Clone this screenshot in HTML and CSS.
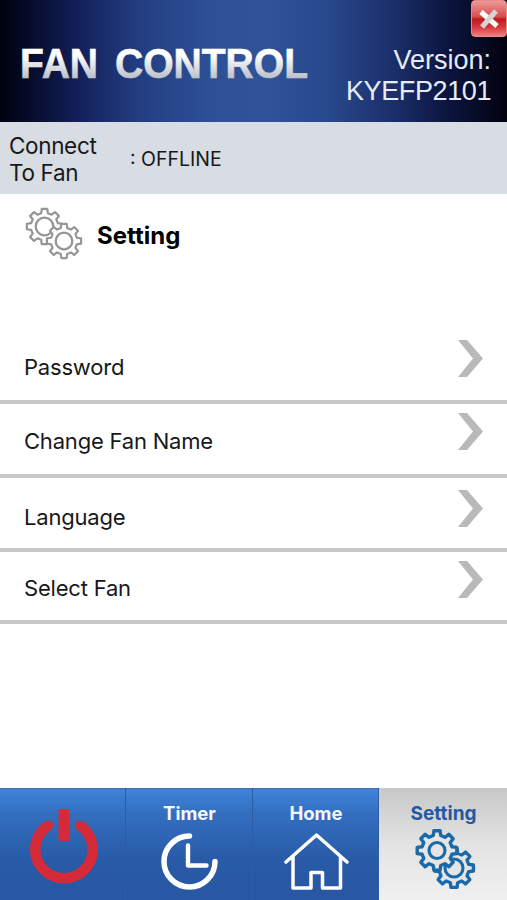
FILE: index.html
```html
<!DOCTYPE html>
<html lang="en">
<head>
<meta charset="utf-8">
<title>Fan Control</title>
<link rel="stylesheet" href="styles.css">
</head>
<body>
<svg class="defs" width="0" height="0" aria-hidden="true">
  <defs>
    <path id="gear" d="M-2.8-18H2.8L3.4-13.6L7.21-12.02L10.75-14.71L14.71-10.75L12.02-7.21L13.6-3.4L18-2.8V2.8L13.6 3.4L12.02 7.21L14.71 10.75L10.75 14.71L7.21 12.02L3.4 13.6L2.8 18H-2.8L-3.4 13.6L-7.21 12.02L-10.75 14.71L-14.71 10.75L-12.02 7.21L-13.6 3.4L-18 2.8V-2.8L-13.6-3.4L-12.02-7.21L-14.71-10.75L-10.75-14.71L-7.21-12.02L-3.4-13.6Z"/>
    <path id="chevron" d="M0 0H9L25 18.500L9 37H0L15 18.500Z"/>
  </defs>
</svg>
<div class="app">
  <header class="header">
    <svg class="title" width="300" height="50" viewBox="0 0 300 50">
      <defs>
        <linearGradient id="metal" gradientUnits="userSpaceOnUse" x1="0" y1="8" x2="0" y2="38">
          <stop offset=".25" stop-color="#fff"/>
          <stop offset="1" stop-color="#bcc0c9"/>
        </linearGradient>
      </defs>
      <text class="title-text" x="-1" y="38" textLength="78" lengthAdjust="spacingAndGlyphs">FAN</text>
      <text class="title-text" x="94" y="38" textLength="193" lengthAdjust="spacingAndGlyphs">CONTROL</text>
    </svg>
    <p class="version">Version:<br><span class="model">KYEFP2101</span></p>
    <button class="close" aria-label="Close">
      <svg width="24" height="24" viewBox="0 0 24 24"><path d="M4 5L20 19" stroke="#fff"/><path d="M19 4L5 20" stroke="#d6d4d4"/></svg>
    </button>
  </header>
  <section class="status">
    <span class="status-label">Connect<br>To Fan</span>
    <span class="status-value">: OFFLINE</span>
  </section>
  <main class="main">
    <div class="heading">
      <svg class="gears" width="60" height="54" viewBox="0 0 60 54">
        <g fill="#fff" stroke="#989694" stroke-width="2.300" stroke-linejoin="round">
          <g transform="translate(19.500 19.500)"><use href="#gear" transform="scale(.98)"/><circle r="8.800"/></g>
          <g transform="translate(39 34)"><use href="#gear" transform="scale(.95)"/><circle r="8.300"/></g>
        </g>
      </svg>
      <h1>Setting</h1>
    </div>
    <ul class="list">
      <li class="row password"><span>Password</span><svg width="25" height="37"><use href="#chevron"/></svg></li>
      <li class="row name"><span>Change Fan Name</span><svg width="25" height="37"><use href="#chevron"/></svg></li>
      <li class="row language"><span>Language</span><svg width="25" height="37"><use href="#chevron"/></svg></li>
      <li class="row select"><span>Select Fan</span><svg width="25" height="37"><use href="#chevron"/></svg></li>
    </ul>
  </main>
  <nav class="tabs">
    <a class="tab power" aria-label="Power">
      <svg width="70" height="78" viewBox="0 0 70 78"><g fill="none" stroke="#d52b38"><path d="M20 18A28.700 28.700 0 1 0 50 18" stroke-width="10.500"/><path d="M20 18L18.500 19M50 18L51.500 19" stroke-width="8" stroke-linecap="round"/><rect x="29.500" y="2" width="11" height="32" rx="2" fill="#d52b38" stroke="none"/></g></svg>
    </a>
    <a class="tab"><span>Timer</span>
      <svg class="i-timer" width="60" height="60" viewBox="0 0 60 60"><g fill="none" stroke="#fff" stroke-width="5.500" stroke-linecap="round" stroke-linejoin="round"><path d="M30.500 5A25.500 25.500 0 1 0 56 30.500"/><path d="M29 14.500V34.500H47.500" stroke-width="4.400"/></g></svg>
    </a>
    <a class="tab"><span>Home</span>
      <svg class="i-home" width="66" height="60" viewBox="0 0 66 60"><g fill="none" stroke="#fff" stroke-width="3.500" stroke-linejoin="round" stroke-linecap="round"><path d="M3 31L33.500 4L64 31"/><path d="M10 26V57H28V41.500H39.500V57H57.500V26"/></g></svg>
    </a>
    <a class="tab active"><span>Setting</span>
      <svg class="i-gears" width="64" height="64" viewBox="0 0 64 64">
        <g fill="#e5e5e6" stroke="#1a69a9" stroke-width="3.100" stroke-linejoin="round">
          <g transform="translate(42 41)"><use href="#gear" transform="scale(1.08)"/><circle r="9"/></g>
          <g transform="translate(25 23.500)"><use href="#gear" transform="scale(1.1)"/><circle r="8"/></g>
        </g>
      </svg>
    </a>
  </nav>
</div>
</body>
</html>
```

FILE: styles.css
```css
* { box-sizing: border-box; }
body { margin: 0; background: #fff; font-family: Inter, "Liberation Sans", sans-serif; color: #17181a; }
.defs { position: absolute; }
.app { position: relative; width: 507px; height: 900px; display: flex; flex-direction: column; overflow: hidden; }
.header { position: relative; height: 122px; flex: none; display: flex; justify-content: space-between; padding: 40px 16px 0 21px;
  background: linear-gradient(90deg, #01020f 0, #070b2c 6%, #121f58 15%, #233f83 28%, #2e5096 42%, #2f5298 53%, #28488c 65%, #1a2e69 78%, #0c1540 88%, #02030e 100%); }
.title { flex: none; overflow: visible; }
.title-text { font: bold 43px "Liberation Sans", sans-serif; fill: url(#metal); stroke: url(#metal); stroke-width: .6px; }
.version { margin: 5px 0 0; text-align: right; font: 27px/31px "Liberation Sans", sans-serif; color: #e6ebf8; white-space: nowrap; }
.model { letter-spacing: -.4px; }
.close { position: absolute; right: 0; top: 0; width: 36px; height: 37px; padding: 0; border: 1px solid #ec8a88; border-radius: 4px;
  display: grid; place-items: center; background: linear-gradient(#ee9a98 0, #d84c4c 45%, #bd1a20 52%, #d8383c 75%, #f08080 100%); }
.close path { stroke-width: 5; }
.status { height: 72px; flex: none; display: flex; align-items: center; padding: 2px 0 0 9px; background: #d8dce3; }
.status-label { width: 121px; font-size: 22.500px; line-height: 27px; letter-spacing: -.35px; }
.status-value { font-size: 19.500px; letter-spacing: 0; }
.main { flex: 1; }
.heading { display: flex; align-items: center; height: 80px; padding-left: 25px; }
.gears { margin-right: 12px; }
h1 { margin: 3px 0 0; font-size: 24px; line-height: 30px; color: #000; }
.list { list-style: none; margin: 50px 0 0; padding: 0; }
.row { display: flex; justify-content: space-between; padding: 0 24px; font-size: 22px; line-height: 30px; letter-spacing: -.2px; border-bottom: 4px solid #c8c8c8; }
.row svg { fill: #b9b9b9; }
.password { height: 80px; padding-top: 16px; }
.name { height: 74px; padding-top: 9px; }
.language { height: 74px; padding-top: 12px; }
.select { height: 72px; padding-top: 9px; }
.row span { margin-top: 12px; }
.row.name span { margin-top: 13px; }
.tabs { height: 112px; flex: none; display: grid; grid-template-columns: 126px 127px 126px 128px; }
.tab { display: flex; flex-direction: column; align-items: center; padding-top: 12px; color: #f4f8ff; font-size: 18.500px; font-weight: 700; line-height: 24px;
  background: linear-gradient(#3f83d8 0, #336fc0 22%, #285aa6 65%, #2857a3 100%); border-top: 1px solid #3f6daf; border-right: 1px solid #2c5ca5; }
.tab span { margin-left: 1px; }
.power { padding: 18px 0 0 3px; }
.active { color: #2359a0; background: linear-gradient(#c7c7c8, #e3e3e4 50%, #f0f0f1); border: 0; padding-top: 14px; }
.active span { font-size: 19px; }
.i-timer { margin-top: 6px; }
.i-home { margin: 6px 0 0 1px; }
.i-gears { margin: 1px 0 0 2px; }
```
